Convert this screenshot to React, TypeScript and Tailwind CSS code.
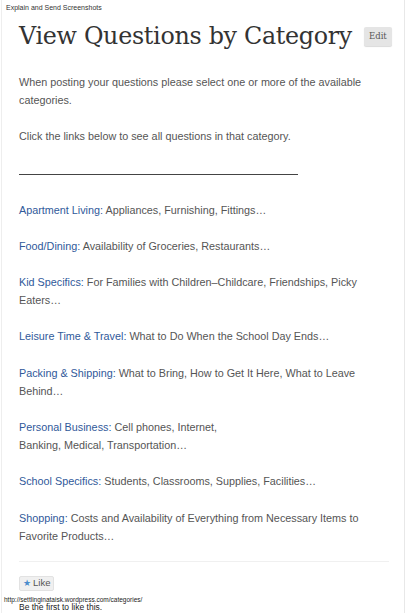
export default function App() {
  const categories = [
    { name: 'Apartment Living', desc: ['Appliances, Furnishing, Fittings…'] },
    { name: 'Food/Dining', desc: ['Availability of Groceries, Restaurants…'] },
    { name: 'Kid Specifics', desc: ['For Families with Children–Childcare, Friendships, Picky Eaters…'] },
    { name: 'Leisure Time & Travel', desc: ['What to Do When the School Day Ends…'] },
    { name: 'Packing & Shipping', desc: ['What to Bring, How to Get It Here, What to Leave Behind…'] },
    { name: 'Personal Business', desc: ['Cell phones, Internet,', 'Banking, Medical, Transportation…'] },
    { name: 'School Specifics', desc: ['Students, Classrooms, Supplies, Facilities…'] },
    { name: 'Shopping', desc: ['Costs and Availability of Everything from Necessary Items to Favorite Products…'] },
  ];

  return (
    <div className="relative w-[407px] h-[613px] overflow-hidden bg-white" style={{ fontFamily: '"Liberation Sans", Arial, sans-serif' }}>
      {/* page frame */}
      <div className="absolute left-[1px] top-0 bottom-0 w-px bg-[#eeeeee]" />
      <div className="absolute left-[404px] top-0 bottom-0 w-px bg-[#e8e8e8]" />

      <div className="pl-[6px] pt-[3px] text-[7px] leading-[9px] text-[#333]">Explain and Send Screenshots</div>

      <div className="pl-[19px] pr-[18px]">
        <div className="flex items-start mt-[8px]">
          <h1 className="whitespace-nowrap text-[23.8px] leading-[32px] text-[#333] tracking-[-0.3px]" style={{ fontFamily: '"DejaVu Serif", serif' }}>
            View Questions by Category
          </h1>
          <span className="ml-[12px] mt-[7px] px-[5px] h-[19px] leading-[19px] text-[8.5px] text-[#555] bg-[#e5e5e5] rounded-[2px] shadow-[0_1px_1px_rgba(0,0,0,0.15)]" style={{ fontFamily: '"DejaVu Serif", serif' }}>
            Edit
          </span>
        </div>

        <div className="mt-[21px] text-[10.8px] leading-[18.2px] text-[#555]">
          <p className="pr-[20px]">When posting your questions please select one or more of the available categories.</p>
          <p className="mt-[18px]">Click the links below to see all questions in that category.</p>
          <div className="mt-[28px] w-[279px] h-px bg-[#444]" />

          <div className="mt-[26px] flex flex-col gap-[18px] pr-[8px]">
            {categories.map((c) => (
              <p key={c.name}>
                <a className="text-[#30599a]">{c.name}:</a>{' '}
                {c.desc.length > 1 ? (
                  <>
                    {c.desc[0]}
                    <br />
                    {c.desc[1]}
                  </>
                ) : (
                  c.desc[0]
                )}
              </p>
            ))}
          </div>

          <div className="mt-[16px] h-px bg-[#f0f0f0]" />
          <div className="mt-[11px]">
            <span className="inline-flex items-center gap-[2px] h-[13px] px-[3px] text-[9.5px] text-[#555] bg-[#f0f0f0] border border-[#e2e2e2] rounded-[2px] box-content">
              <span className="text-[#4a8ccc] text-[9px] leading-none">★</span>Like
            </span>
          </div>
        </div>
      </div>

      <div className="pl-[4px] mt-[5px] text-[6.5px] leading-[7px] text-[#222]">http://settlinginataisk.wordpress.com/categories/</div>
      <div className="pl-[19px] text-[8.5px] leading-[9px] text-[#222]">Be the first to like this.</div>
    </div>
  );
}
